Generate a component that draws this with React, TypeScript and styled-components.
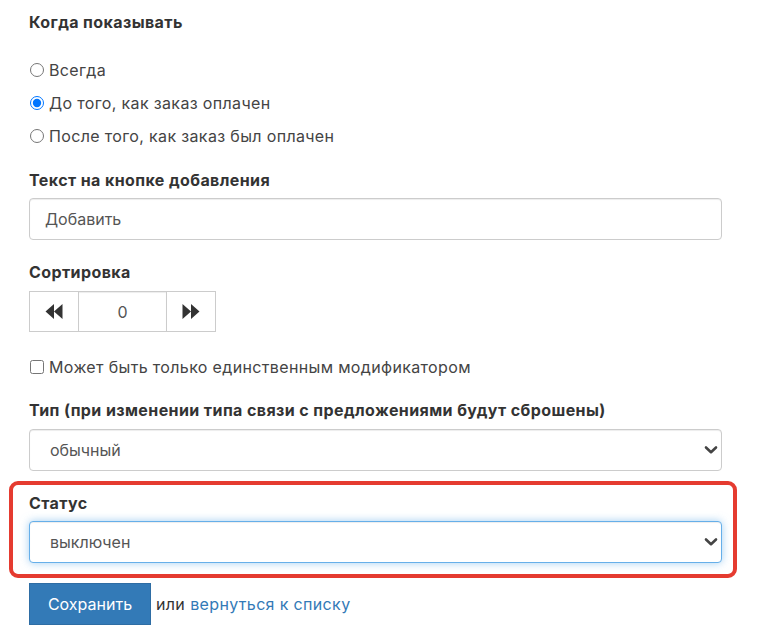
import React from "react";
import styled, { createGlobalStyle } from "styled-components";

const Global = createGlobalStyle`
  html, body { margin: 0; padding: 0; background: #fff; }
  body { font-family: Inter, "Noto Sans", "Liberation Sans", sans-serif; color: #333; letter-spacing: 0.35px; }
  * { box-sizing: border-box; }
`;

const Page = styled.form`
  width: 722px;
  padding: 11px 0 14px 29px;
  display: flex;
  flex-direction: column;
`;

const Heading = styled.div<{ $mt?: number; $mb?: number }>`
  font-size: 16px;
  font-weight: 700;
  line-height: 22px;
  letter-spacing: 0.4px;
  color: #333;
  margin-top: ${(p) => p.$mt ?? 0}px;
  margin-bottom: ${(p) => p.$mb ?? 0}px;
`;

const RadioGroup = styled.div`
  display: flex;
  flex-direction: column;
  margin-top: 20px;
`;

const Choice = styled.label<{ $h?: number; $mt?: number }>`
  display: flex;
  align-items: center;
  gap: 5px;
  height: ${(p) => p.$h ?? 33}px;
  margin-top: ${(p) => p.$mt ?? 0}px;
  font-size: 16px;
  color: #444;
  cursor: pointer;
  input {
    margin: 0 0 0 1px;
    width: 14px;
    height: 14px;
  }
`;

const TextInput = styled.input`
  width: 100%;
  height: 42px;
  border: 1px solid #ccc;
  border-radius: 4px;
  padding: 0 15px;
  font: inherit;
  font-size: 16px;
  color: #555;
  box-shadow: inset 0 1px 1px rgba(0, 0, 0, 0.075);
  outline: none;
`;

const Sorter = styled.div`
  display: flex;
  width: 187px;
  height: 41px;
`;

const SortBtn = styled.button<{ $side: "l" | "r" }>`
  width: 49px;
  height: 41px;
  border: 1px solid #ccc;
  ${(p) => (p.$side === "l" ? "border-right: none;" : "border-left: none;")}
  background: #fff;
  display: flex;
  align-items: center;
  justify-content: center;
  padding: 0;
  border-radius: 0;
`;

const SortValue = styled.input`
  width: 89px;
  height: 41px;
  border: 1px solid #ccc;
  text-align: center;
  font: inherit;
  font-size: 16px;
  color: #555;
  padding: 0;
  border-radius: 0;
  outline: none;
  box-shadow: inset 0 1px 1px rgba(0, 0, 0, 0.075);
`;

const SelectWrap = styled.div`
  position: relative;
  width: 100%;
`;

const Select = styled.select<{ $focus?: boolean }>`
  appearance: none;
  width: 100%;
  height: 42px;
  border: 1px solid ${(p) => (p.$focus ? "#66afe9" : "#ccc")};
  border-radius: 4px;
  padding: 0 20px;
  font: inherit;
  font-size: 16px;
  color: #555;
  background: #fff;
  outline: none;
  box-shadow: ${(p) =>
    p.$focus
      ? "inset 0 1px 1px rgba(0,0,0,.075), 0 0 8px rgba(102,175,233,.6)"
      : "inset 0 1px 1px rgba(0,0,0,.075)"};
`;

const Chevron = styled.svg`
  position: absolute;
  right: 3px;
  top: 50%;
  transform: translateY(-50%);
  pointer-events: none;
`;

const Highlight = styled.div`
  margin: 10px -15px 0 -20px;
  padding: 7px 11px 11px 16px;
  border: 4px solid #e53b30;
  border-radius: 9px;
  display: flex;
  flex-direction: column;
`;

const Actions = styled.div`
  display: flex;
  align-items: center;
  margin-top: 5px;
  font-size: 16px;
  color: #333;
`;

const SaveButton = styled.button`
  width: 122px;
  height: 42px;
  background: #337ab7;
  border: 1px solid #2e6da4;
  color: #fff;
  font: inherit;
  font-size: 16px;
  border-radius: 0;
  padding: 0;
  margin-right: 5px;
`;

const Link = styled.a`
  color: #337ab7;
  text-decoration: none;
  margin-left: 5px;
`;

const ChevronIcon = () => (
  <Chevron width="16" height="10" viewBox="0 0 16 10">
    <path d="M3 2.5 L8 7.2 L13 2.5" fill="none" stroke="#444" strokeWidth="2.6" strokeLinecap="round" strokeLinejoin="round" />
  </Chevron>
);

const SelectField = ({ value, focus }: { value: string; focus?: boolean }) => (
  <SelectWrap>
    <Select $focus={focus} defaultValue={value}>
      <option value={value}>{value}</option>
    </Select>
    <ChevronIcon />
  </SelectWrap>
);

export default function App() {
  return (
    <>
      <Global />
      <Page onSubmit={(e) => e.preventDefault()}>
        <Heading>Когда показывать</Heading>
        <RadioGroup>
          <Choice>
            <input type="radio" name="when" />
            Всегда
          </Choice>
          <Choice>
            <input type="radio" name="when" defaultChecked />
            До того, как заказ оплачен
          </Choice>
          <Choice>
            <input type="radio" name="when" />
            После того, как заказ был оплачен
          </Choice>
        </RadioGroup>

        <Heading $mt={17} $mb={7}>Текст на кнопке добавления</Heading>
        <TextInput defaultValue="Добавить" />

        <Heading $mt={21} $mb={8}>Сортировка</Heading>
        <Sorter>
          <SortBtn type="button" $side="l">
            <svg width="18" height="15" viewBox="0 0 18 15">
              <path d="M9 0 L0.5 7.5 L9 15 Z M17.5 0 L9 7.5 L17.5 15 Z" fill="#333" />
            </svg>
          </SortBtn>
          <SortValue defaultValue="0" />
          <SortBtn type="button" $side="r">
            <svg width="18" height="15" viewBox="0 0 18 15">
              <path d="M0.5 0 L9 7.5 L0.5 15 Z M9 0 L17.5 7.5 L9 15 Z" fill="#333" />
            </svg>
          </SortBtn>
        </Sorter>

        <Choice $h={22} $mt={24}>
          <input type="checkbox" />
          Может быть только единственным модификатором
        </Choice>

        <Heading $mt={21} $mb={8}>Тип (при изменении типа связи с предложениями будут сброшены)</Heading>
        <SelectField value="обычный" />

        <Highlight>
          <Heading $mb={7}>Статус</Heading>
          <SelectField value="выключен" focus />
        </Highlight>

        <Actions>
          <SaveButton type="submit">Сохранить</SaveButton>
          или
          <Link href="#">вернуться к списку</Link>
        </Actions>
      </Page>
    </>
  );
}
